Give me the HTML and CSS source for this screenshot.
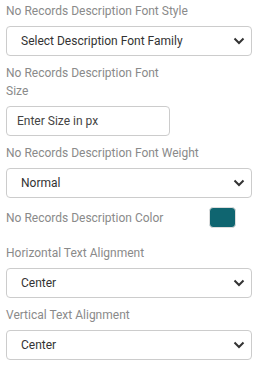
FILE: index.html
```html
<!DOCTYPE html>
<html>
<head>
    <meta charset="UTF-8">
    <title>No Records Settings</title>
    <link rel="stylesheet" href="styles.css">
</head>
<body>
    <div class="settings">
        <div class="field">
            <label class="field-label">No Records Description Font Style</label>
            <div class="select-box">
                <span>Select Description Font Family</span>
                <svg class="chevron" width="12" height="8" viewBox="0 0 12 8"><path d="M1.5 1.5 L6 6 L10.5 1.5" fill="none" stroke="#333" stroke-width="2"/></svg>
            </div>
        </div>

        <div class="field">
            <label class="field-label narrow">No Records Description Font Size</label>
            <input type="text" class="text-input" placeholder="Enter Size in px">
        </div>

        <div class="field">
            <label class="field-label">No Records Description Font Weight</label>
            <div class="select-box">
                <span>Normal</span>
                <svg class="chevron" width="12" height="8" viewBox="0 0 12 8"><path d="M1.5 1.5 L6 6 L10.5 1.5" fill="none" stroke="#333" stroke-width="2"/></svg>
            </div>
        </div>

        <div class="color-row">
            <label class="field-label">No Records Description Color</label>
            <div class="swatch"></div>
        </div>

        <div class="field">
            <label class="field-label">Horizontal Text Alignment</label>
            <div class="select-box">
                <span>Center</span>
                <svg class="chevron" width="12" height="8" viewBox="0 0 12 8"><path d="M1.5 1.5 L6 6 L10.5 1.5" fill="none" stroke="#333" stroke-width="2"/></svg>
            </div>
        </div>

        <div class="field">
            <label class="field-label">Vertical Text Alignment</label>
            <div class="select-box">
                <span>Center</span>
                <svg class="chevron" width="12" height="8" viewBox="0 0 12 8"><path d="M1.5 1.5 L6 6 L10.5 1.5" fill="none" stroke="#333" stroke-width="2"/></svg>
            </div>
        </div>
    </div>
</body>
</html>
```

FILE: styles.css
```css
body {
    font-family: Roboto, "Liberation Sans", sans-serif;
    font-size: 12px;
    background-color: #fff;
    margin: 0;
    padding: 0;
}

.settings {
    width: 246px;
    padding: 2px 0 0 6px;
}

.field {
    margin-bottom: 8px;
}

.field-label {
    display: block;
    color: #8a8a8a;
    line-height: 18px;
    margin-bottom: 6px;
}

.field-label.narrow {
    width: 160px;
}

.select-box {
    display: flex;
    align-items: center;
    justify-content: space-between;
    height: 30px;
    box-sizing: border-box;
    border: 1px solid #ccc;
    border-radius: 4px;
    padding: 0 6px 0 14px;
    color: #333;
}

.chevron {
    display: block;
}

.text-input {
    display: block;
    width: 164px;
    height: 30px;
    box-sizing: border-box;
    border: 1px solid #ccc;
    border-radius: 4px;
    padding: 0 10px;
    font-family: inherit;
    font-size: 12px;
    color: #333;
}

.text-input::placeholder {
    color: #444;
}

.color-row {
    display: flex;
    align-items: center;
    justify-content: space-between;
    width: 230px;
    height: 21px;
    margin: 9px 0 16px;
}

.color-row .field-label {
    margin-bottom: 0;
}

.swatch {
    width: 27px;
    height: 21px;
    background-color: #0f6570;
    border: 1px solid #ddd;
    border-radius: 4px;
    box-sizing: border-box;
}
```
